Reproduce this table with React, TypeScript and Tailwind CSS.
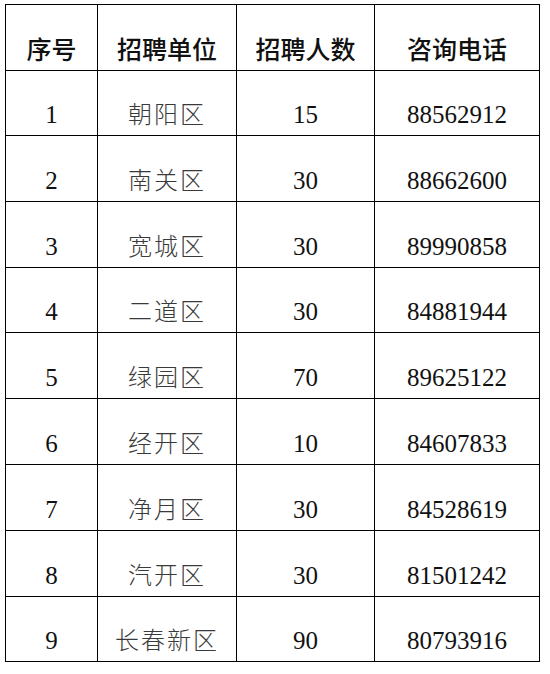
const rows = [
  { no: '1', unit: '朝阳区', count: '15', phone: '88562912', h: 'h-[65px]' },
  { no: '2', unit: '南关区', count: '30', phone: '88662600', h: 'h-[66px]' },
  { no: '3', unit: '宽城区', count: '30', phone: '89990858', h: 'h-[66px]' },
  { no: '4', unit: '二道区', count: '30', phone: '84881944', h: 'h-[65px]' },
  { no: '5', unit: '绿园区', count: '70', phone: '89625122', h: 'h-[66px]' },
  { no: '6', unit: '经开区', count: '10', phone: '84607833', h: 'h-[66px]' },
  { no: '7', unit: '净月区', count: '30', phone: '84528619', h: 'h-[66px]' },
  { no: '8', unit: '汽开区', count: '30', phone: '81501242', h: 'h-[66px]' },
  { no: '9', unit: '长春新区', count: '90', phone: '80793916', h: 'h-[65px]' },
]

const cols = 'grid grid-cols-[92px_139px_138px_165px]'
const cell = 'flex items-end justify-center border-r border-b border-black'
const num = 'font-[Liberation_Serif,serif] text-[25px] leading-none text-[#111] pb-[8px]'
const cjk = 'font-[Noto_Sans_CJK_SC,sans-serif] text-[24px] leading-none text-[#3a3a3a] font-light tracking-[2px] pb-[10px]'
const head = 'font-[Noto_Sans_CJK_SC,sans-serif] text-[25px] leading-none text-[#111] font-medium pb-[9px]'

export default function App() {
  return (
    <div className="w-[550px] h-[674px] bg-white pt-[4px] pl-[5px]">
      <div className="w-[535px] border-l border-t border-black">
        <div className={`${cols} h-[66px]`}>
          <div className={`${cell} ${head}`}>序号</div>
          <div className={`${cell} ${head}`}>招聘单位</div>
          <div className={`${cell} ${head}`}>招聘人数</div>
          <div className={`${cell} ${head}`}>咨询电话</div>
        </div>
        {rows.map((r) => (
          <div key={r.no} className={`${cols} ${r.h}`}>
            <div className={`${cell} ${num}`}>{r.no}</div>
            <div className={`${cell} ${cjk}`}>{r.unit}</div>
            <div className={`${cell} ${num}`}>{r.count}</div>
            <div className={`${cell} ${num}`}>{r.phone}</div>
          </div>
        ))}
      </div>
    </div>
  )
}
